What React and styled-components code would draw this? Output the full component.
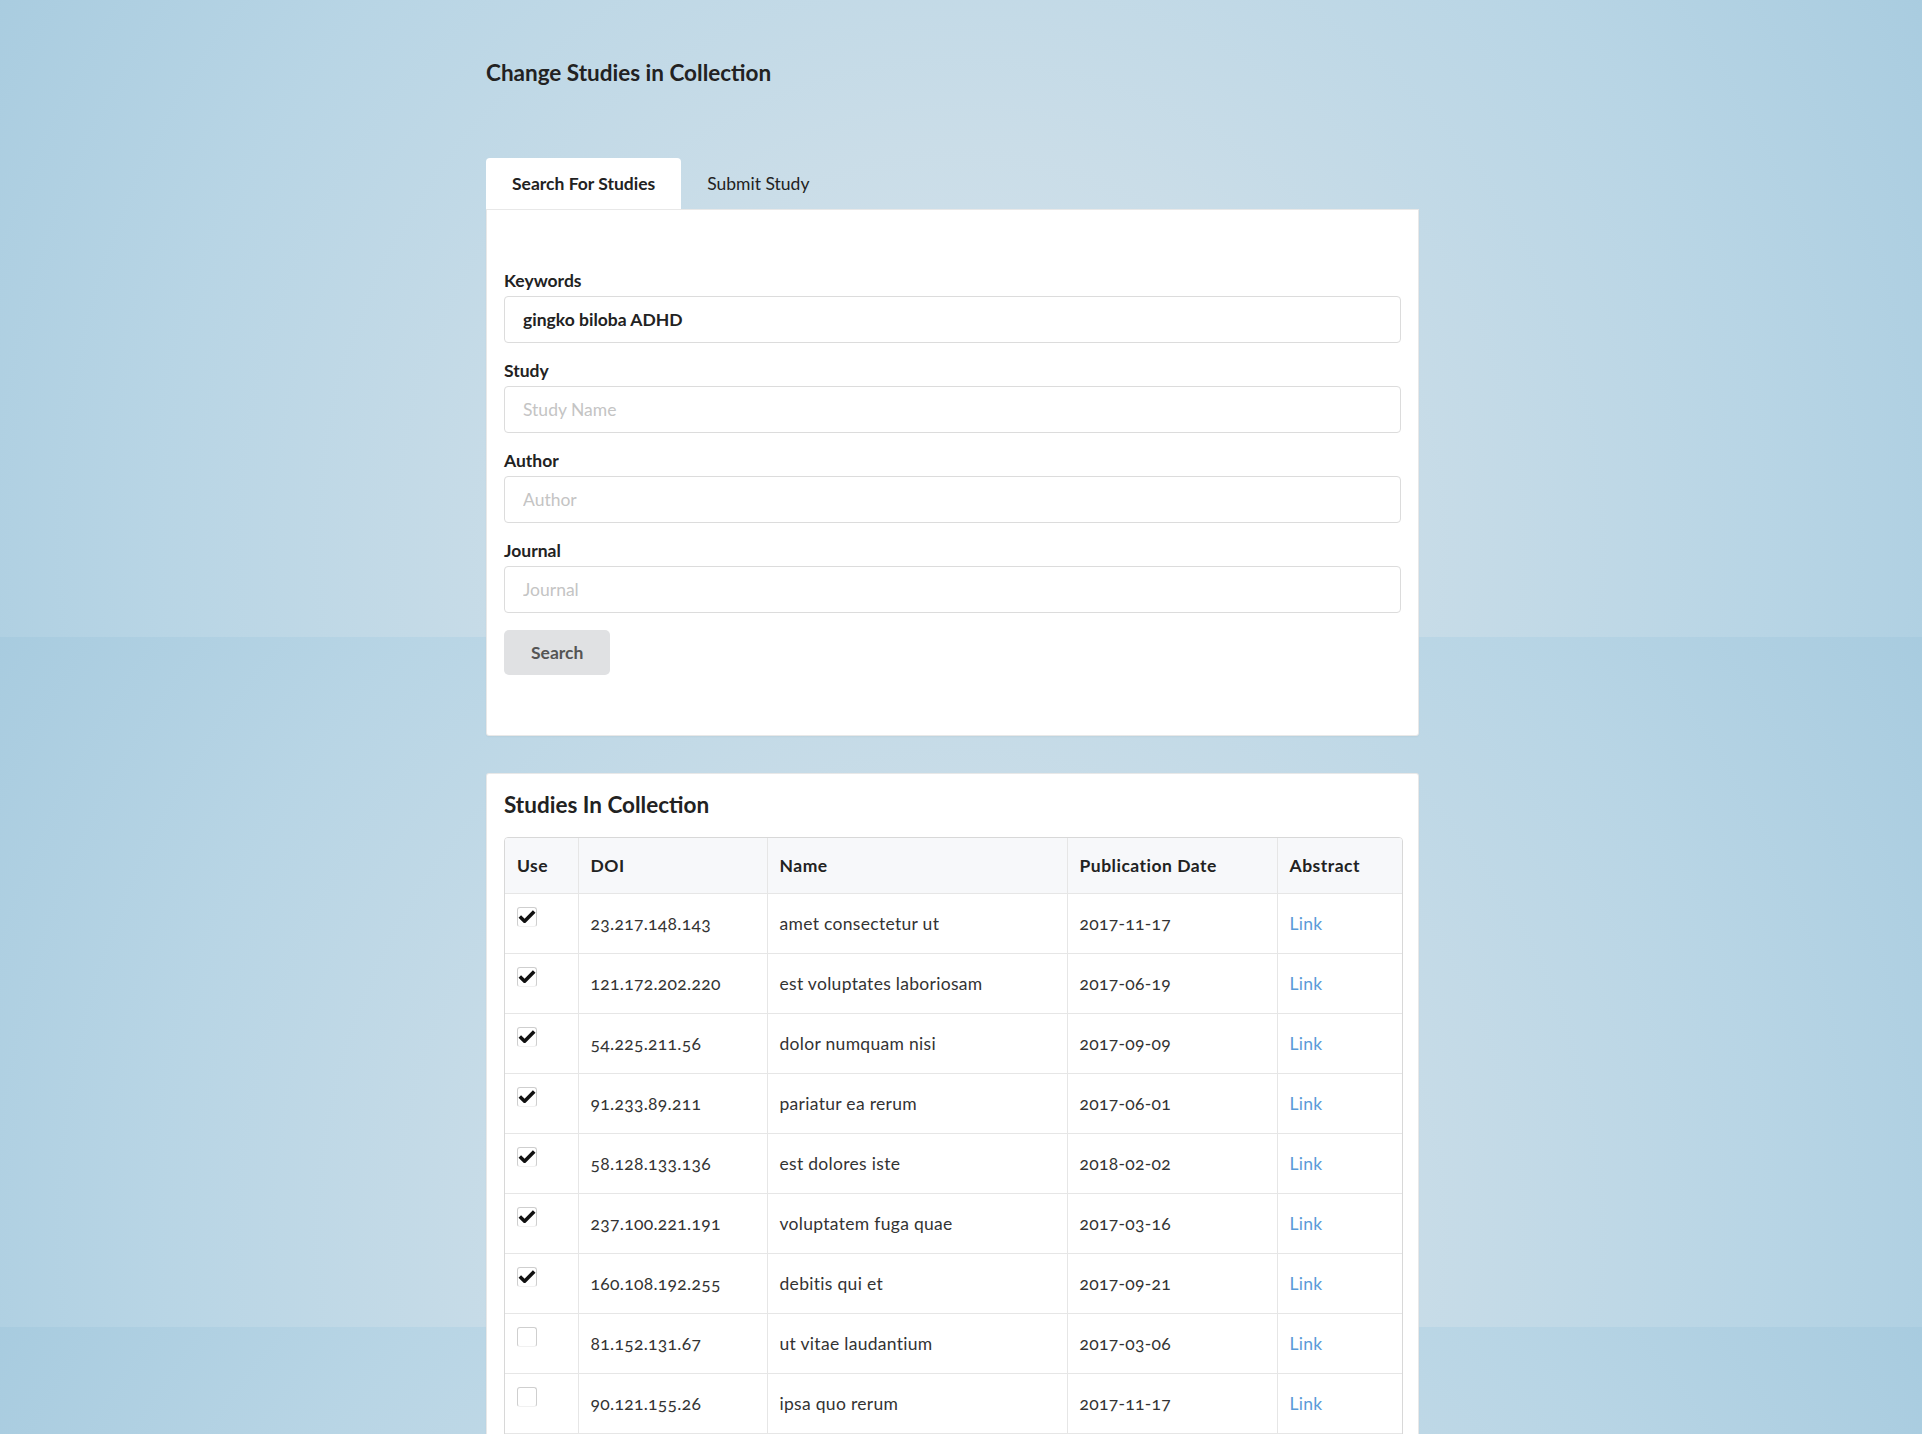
import React from 'react';
import styled, { createGlobalStyle } from 'styled-components';

const studies = [
  { use: true, doi: '23.217.148.143', name: 'amet consectetur ut', date: '2017-11-17' },
  { use: true, doi: '121.172.202.220', name: 'est voluptates laboriosam', date: '2017-06-19' },
  { use: true, doi: '54.225.211.56', name: 'dolor numquam nisi', date: '2017-09-09' },
  { use: true, doi: '91.233.89.211', name: 'pariatur ea rerum', date: '2017-06-01' },
  { use: true, doi: '58.128.133.136', name: 'est dolores iste', date: '2018-02-02' },
  { use: true, doi: '237.100.221.191', name: 'voluptatem fuga quae', date: '2017-03-16' },
  { use: true, doi: '160.108.192.255', name: 'debitis qui et', date: '2017-09-21' },
  { use: false, doi: '81.152.131.67', name: 'ut vitae laudantium', date: '2017-03-06' },
  { use: false, doi: '90.121.155.26', name: 'ipsa quo rerum', date: '2017-11-17' },
];

const fields = [
  { label: 'Keywords', value: 'gingko biloba ADHD', placeholder: 'Keywords' },
  { label: 'Study', value: '', placeholder: 'Study Name' },
  { label: 'Author', value: '', placeholder: 'Author' },
  { label: 'Journal', value: '', placeholder: 'Journal' },
];

const GlobalStyle = createGlobalStyle`
  html, body {
    margin: 0;
    padding: 0;
  }
  body {
    font-family: Lato, "Open Sans", sans-serif;
    color: #222;
  }
  * {
    box-sizing: border-box;
  }
`;

const Page = styled.div`
  min-height: 100vh;
  padding: 0 17px 60px 0;
  background-color: #b4d3e4;
  background-image: radial-gradient(
    circle 1150px at 960px 600px,
    #d6e4ed 0%,
    #cadde8 35%,
    #b8d5e5 70%,
    #a7cbdf 100%
  );
  background-size: 100% 690px;
  background-position: 0 -53px;
  background-repeat: repeat-y;
`;

const Container = styled.div`
  width: 933px;
  margin: 0 auto;
`;

const Title = styled.h1`
  margin: 0;
  padding: 58px 0 0;
  font-size: 22.5px;
  line-height: 30px;
  font-weight: 700;
  color: #222;
`;

const Tabs = styled.div`
  display: flex;
  margin-top: 70px;
`;

const Tab = styled.div`
  height: 51px;
  display: flex;
  align-items: center;
  padding: 0 26px;
  font-size: 17.5px;
  font-weight: ${p => (p.active ? 700 : 400)};
  color: #222;
  background: ${p => (p.active ? '#fff' : 'transparent')};
  border-radius: 4px 4px 0 0;
  cursor: pointer;
`;

const Card = styled.div`
  background: #fff;
  border: 1px solid rgba(0, 0, 0, 0.09);
  border-radius: ${p => (p.flatTop ? '0 0 3px 3px' : '3px')};
  padding: ${p => p.pad};
  margin-bottom: 37px;
  box-shadow: 0 1px 2px rgba(0, 0, 0, 0.04);
`;

const Field = styled.div`
  margin-bottom: 16px;
`;

const Label = styled.label`
  display: block;
  font-size: 17.5px;
  line-height: 24px;
  font-weight: 700;
  color: #222;
  margin-bottom: 3px;
`;

const Input = styled.input`
  display: block;
  width: 100%;
  height: 47px;
  padding: 0 18px;
  border: 1px solid #dcdcdc;
  border-radius: 4px;
  font-family: Lato, "Open Sans", sans-serif;
  font-size: 17.5px;
  font-weight: 700;
  color: #222;
  outline: none;

  &::placeholder {
    color: #c4c4c4;
    font-weight: 400;
  }
`;

const SearchButton = styled.button`
  height: 45px;
  padding: 0 27px;
  margin-top: 1px;
  border: none;
  border-radius: 5px;
  background: #e0e1e3;
  font-family: Lato, "Open Sans", sans-serif;
  font-size: 17.5px;
  font-weight: 700;
  color: #555;
  cursor: pointer;
`;

const SectionTitle = styled.h2`
  margin: 0 0 17px;
  font-size: 22.5px;
  line-height: 30px;
  font-weight: 700;
  color: #222;
`;

const TableWrap = styled.div`
  width: calc(100% + 2px);
  border: 1px solid #d8d8d8;
  border-radius: 4px 4px 0 0;
  overflow: hidden;
`;

const Table = styled.table`
  width: 100%;
  border-collapse: collapse;
  table-layout: fixed;
  font-size: 17.5px;
  font-variant-numeric: oldstyle-nums;
`;

const Th = styled.th`
  height: 55px;
  padding: 0 12px;
  text-align: left;
  font-weight: 700;
  letter-spacing: 0.5px;
  color: #222;
  background: #f7f8fa;
  border-left: ${p => (p.first ? 'none' : '1px solid #e6e6e6')};
  border-bottom: 1px solid #e6e6e6;
`;

const Td = styled.td`
  height: 60px;
  padding: ${p => (p.top ? '13px 12px 0' : '0 12px')};
  vertical-align: ${p => (p.top ? 'top' : 'middle')};
  color: #333;
  letter-spacing: 0.3px;
  border-left: ${p => (p.first ? 'none' : '1px solid #e6e6e6')};
  border-bottom: 1px solid #e6e6e6;
`;

const Check = styled.span`
  display: block;
  width: 20px;
  height: 20px;
  border: 1px solid #cfcfcf;
  border-bottom-color: #f1f1f1;
  border-radius: 3px;

  svg {
    display: block;
  }
`;

const Link = styled.a`
  color: #5b9bd8;
  text-decoration: none;
`;

function CheckMark() {
  return (
    <svg width="18" height="18" viewBox="0 0 18 18">
      <path
        d="M1.8 8.4 L6.6 13.2 L16.2 3.4"
        fill="none"
        stroke="#111"
        strokeWidth="3.6"
        strokeLinejoin="round"
      />
    </svg>
  );
}

export default function App() {
  return (
    <Page>
      <GlobalStyle />
      <Container>
        <Title>Change Studies in Collection</Title>

        <Tabs>
          <Tab active>Search For Studies</Tab>
          <Tab>Submit Study</Tab>
        </Tabs>
        <Card flatTop pad="59px 17px 60px">
          {fields.map(f => (
            <Field key={f.label}>
              <Label>{f.label}</Label>
              <Input defaultValue={f.value} placeholder={f.placeholder} />
            </Field>
          ))}
          <SearchButton>Search</SearchButton>
        </Card>

        <Card pad="16px 17px 40px">
          <SectionTitle>Studies In Collection</SectionTitle>
          <TableWrap>
            <Table>
              <colgroup>
                <col style={{ width: 73 }} />
                <col style={{ width: 189 }} />
                <col style={{ width: 300 }} />
                <col style={{ width: 210 }} />
                <col />
              </colgroup>
              <thead>
                <tr>
                  <Th first>Use</Th>
                  <Th>DOI</Th>
                  <Th>Name</Th>
                  <Th>Publication Date</Th>
                  <Th>Abstract</Th>
                </tr>
              </thead>
              <tbody>
                {studies.map(s => (
                  <tr key={s.doi}>
                    <Td first top>
                      <Check>{s.use && <CheckMark />}</Check>
                    </Td>
                    <Td>{s.doi}</Td>
                    <Td>{s.name}</Td>
                    <Td>{s.date}</Td>
                    <Td>
                      <Link href="#">Link</Link>
                    </Td>
                  </tr>
                ))}
              </tbody>
            </Table>
          </TableWrap>
        </Card>
      </Container>
    </Page>
  );
}
